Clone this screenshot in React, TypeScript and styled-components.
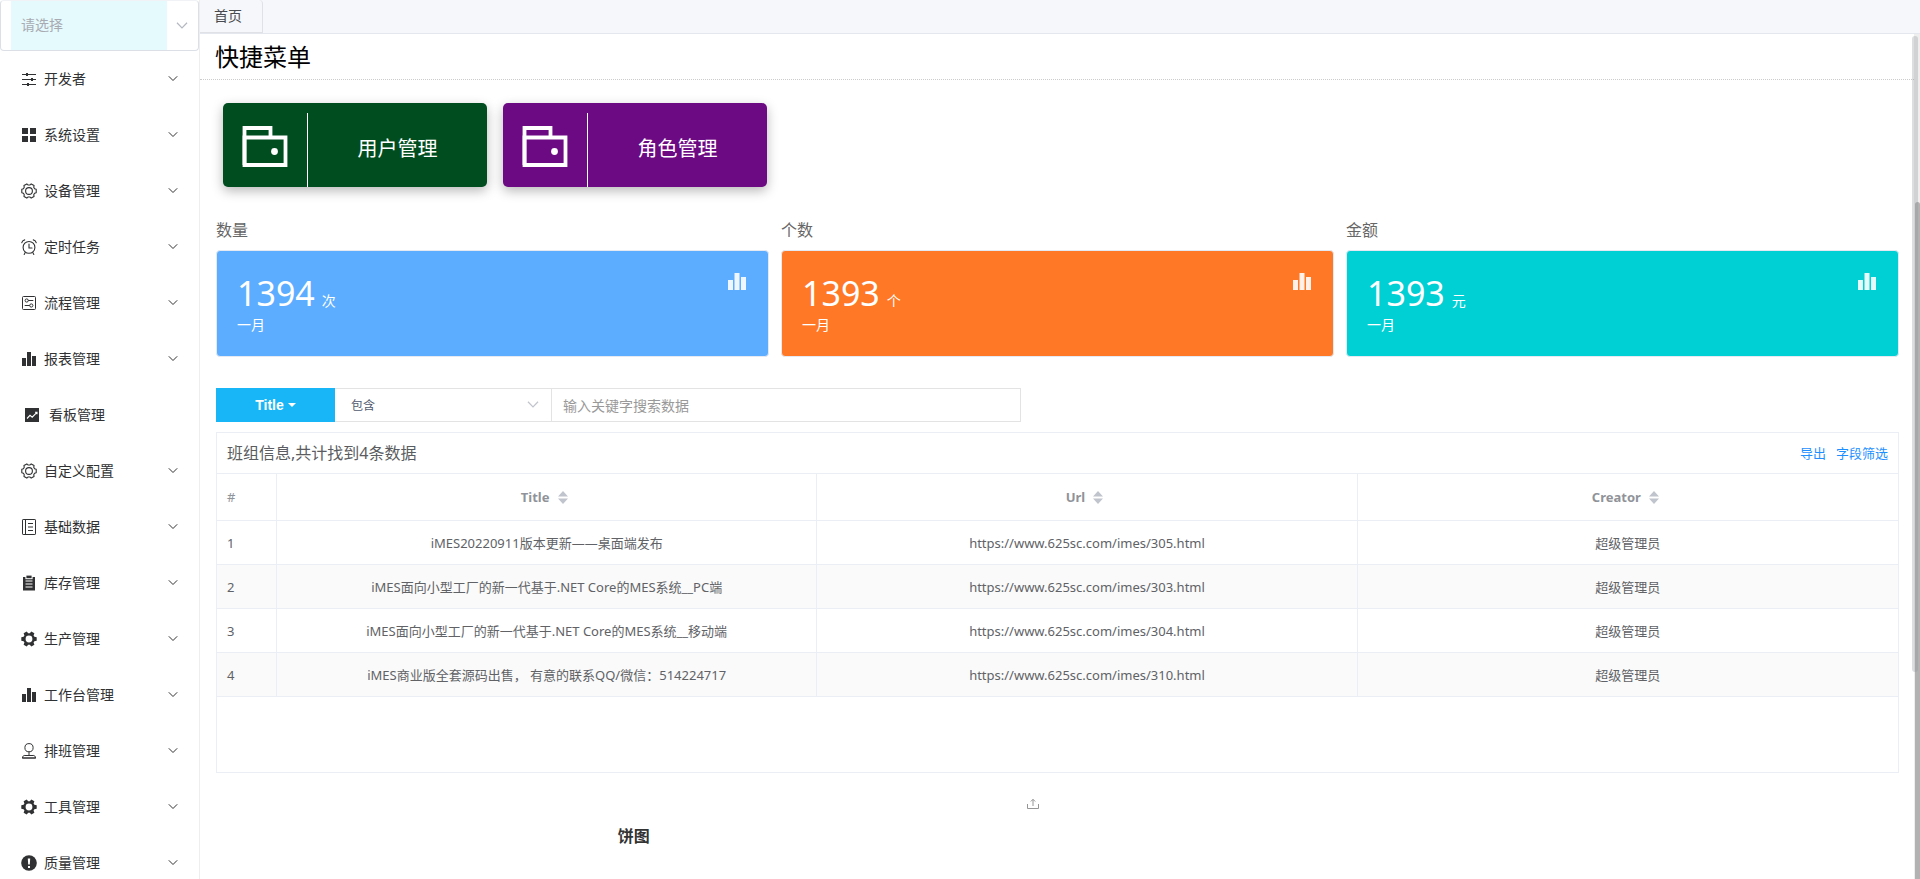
import React from "react";
import styled, { createGlobalStyle } from "styled-components";

const GlobalStyle = createGlobalStyle`
  *, *::before, *::after { box-sizing: border-box; }
  body {
    margin: 0;
    background: #fff;
    color: #606266;
    font-family: "Noto Sans", "Noto Sans CJK SC", sans-serif;
    font-size: 14px;
  }
  button, select, input { font-family: inherit; margin: 0; }
  ul, h1, h2, p { margin: 0; padding: 0; }
  ul { list-style: none; }
`;

/* ---------- icons ---------- */

const gearPath = (outer: number, inner: number) => {
  const points: string[] = [];
  for (let i = 0; i < 6; i++) {
    const base = i * 60;
    [
      [base - 13, outer],
      [base + 13, outer],
      [base + 22, inner],
      [base + 38, inner],
    ].forEach(([deg, r]) => {
      const a = (deg * Math.PI) / 180;
      points.push(`${(8 + r * Math.cos(a)).toFixed(2)} ${(8 + r * Math.sin(a)).toFixed(2)}`);
    });
  }
  return `M${points.join("L")}Z`;
};

const icons = {
  operation: (
    <>
      <path d="M1 3.5h14M1 8.5h14M1 13.5h14" stroke="currentColor" strokeWidth="1" />
      <path d="M5 2h2v3H5zM10 7h2v3h-2zM6 12h2v3H6z" fill="currentColor" />
    </>
  ),
  menu: <path d="M1 1h6v6H1zM9 1h6v6H9zM1 9h6v6H1zM9 9h6v6H9z" fill="currentColor" />,
  setting: (
    <g fill="none" stroke="currentColor" strokeWidth="1.1" strokeLinejoin="round">
      <path d={gearPath(7.4, 6)} />
      <circle cx="8" cy="8" r="3.4" />
    </g>
  ),
  alarm: (
    <g fill="none" stroke="currentColor" strokeWidth="1.1" strokeLinecap="round">
      <circle cx="8" cy="8.4" r="5.9" />
      <path d="M8 5v4h3M4.2 13.6l-1 1.8M11.8 13.6l1 1.8M.7 3.8A4 4 0 0 1 3.7.9M15.3 3.8A4 4 0 0 0 12.3.9" />
    </g>
  ),
  setup: (
    <g fill="none" stroke="currentColor">
      <rect x="1.5" y="1.5" width="13" height="13" rx="1" />
      <circle cx="5.7" cy="5.5" r="1.6" />
      <circle cx="10.3" cy="10.5" r="1.6" />
      <path d="M7.3 5.5h5M3.7 10.5h5" />
    </g>
  ),
  data: <path d="M1 7h4v8H1zM6 1h4v14H6zM11 5h4v10h-4z" fill="currentColor" />,
  marketing: (
    <>
      <path d="M1 1h14v14H1z" fill="currentColor" />
      <path d="M3 11.5l3-3.2 2.2 1.9 4.5-4.6M11 5.2h2v2" fill="none" stroke="#fff" strokeWidth="1.1" />
    </>
  ),
  notebook: (
    <g fill="none" stroke="currentColor">
      <rect x="1.5" y=".5" width="13" height="15" rx=".6" />
      <path d="M4.5.5v15M7 4.5h5M7 8h5M7 11.5h5" />
    </g>
  ),
  order: (
    <>
      <path d="M2 2h12v13.5H2z" fill="currentColor" />
      <path d="M4.5 6h7M4.5 9h7M4.5 12h7" stroke="#fff" strokeWidth="1" />
      <path d="M4.4 0h7.2v4.2H4.4z" fill="#fff" />
      <path d="M5.4.6h5.2v2.6H5.4z" fill="currentColor" />
    </>
  ),
  tools: (
    <path
      fillRule="evenodd"
      fill="currentColor"
      d={`${gearPath(7.9, 5.8)}M8 4.6a3.4 3.4 0 1 0 0 6.8a3.4 3.4 0 1 0 0-6.8Z`}
    />
  ),
  coordinate: (
    <g fill="none" stroke="currentColor">
      <circle cx="8" cy="4.7" r="4.1" />
      <path d="M8 8.8v3.7M1.6 15v-1.4l1.6-1.1h9.6l1.6 1.1V15zM1 15h14" />
    </g>
  ),
  warning: (
    <>
      <circle cx="8" cy="8" r="7.8" fill="currentColor" />
      <path d="M6.8 3.4h2.4L8.8 9.4H7.2zM7 11h2v1.9H7z" fill="#fff" />
    </>
  ),
};

type IconName = keyof typeof icons;

const Glyph = styled.svg`
  flex: none;
  display: block;
  width: 16px;
  height: 16px;
`;

const Icon = ({ name }: { name: IconName }) => (
  <Glyph viewBox="0 0 16 16" aria-hidden="true">
    {icons[name]}
  </Glyph>
);

const ChevronSvg = styled.svg<{ $width: number; $color: string }>`
  flex: none;
  display: block;
  width: ${(p) => p.$width}px;
  height: ${(p) => p.$width}px;
  color: ${(p) => p.$color};
  pointer-events: none;
`;

const Chevron = ({ width = 10, color = "#303133" }: { width?: number; color?: string }) => (
  <ChevronSvg $width={width} $color={color} viewBox="0 0 10 10" aria-hidden="true">
    <path d="M.8 2.300L5 6.500l4.200-4.200" fill="none" stroke="currentColor" strokeWidth="1" />
  </ChevronSvg>
);

/* ---------- shell ---------- */

const Shell = styled.div`
  display: flex;
  height: 100vh;
  overflow: hidden;
`;

const Sidebar = styled.aside`
  flex: 0 0 200px;
  border-right: 1px solid #eee;
  overflow: hidden;
`;

const SideSelectBox = styled.div`
  display: flex;
  align-items: center;
  height: 51px;
  padding: 0 10px;
  border: 1px solid #dcdfe6;
  border-top-color: #f0f2f5;
  border-radius: 4px;
`;

const SideSelect = styled.select`
  flex: 1;
  align-self: stretch;
  min-width: 0;
  margin-right: 9px;
  padding: 0 10px 3px;
  border: 0;
  appearance: none;
  background: #e5fafd;
  color: #a8abb2;
  font-size: 14px;
  outline: none;
`;

const MenuButton = styled.button<{ $leaf: boolean }>`
  display: flex;
  align-items: center;
  gap: ${(p) => (p.$leaf ? 9 : 7)}px;
  width: 100%;
  height: 56px;
  padding: 0 21px 0 ${(p) => (p.$leaf ? 24 : 21)}px;
  border: 0;
  background: none;
  color: #303133;
  font-size: 14px;
  line-height: 20px;
  text-align: left;
  cursor: pointer;
`;

const MenuText = styled.span`
  flex: 1;
`;

const Main = styled.main`
  position: relative;
  display: flex;
  flex: 1;
  flex-direction: column;
  min-width: 0;
`;

const TabBar = styled.div`
  flex: none;
  display: flex;
  align-items: flex-start;
  height: 34px;
  border-bottom: 1px solid #e4e7ed;
  background: #f5f7fa;
`;

const Tab = styled.button`
  height: 33px;
  padding: 0 20px 0 14px;
  border: 1px solid #dfe1e6;
  border-width: 0 1px 1px 0;
  border-radius: 0 4px 0 0;
  background: #f5f7fa;
  color: #484a4d;
  font-size: 14px;
  line-height: 20px;
`;

const Content = styled.div`
  flex: 1;
  min-height: 0;
  margin-right: 6px;
  overflow: hidden;
`;

const ScrollTrack = styled.div`
  position: absolute;
  top: 34px;
  right: 0;
  bottom: 0;
  width: 6px;
  background: #eee;
`;

const ScrollThumb = styled.div`
  position: absolute;
  top: 168px;
  right: 0;
  bottom: 0;
  width: 5px;
  border-radius: 3px 3px 0 0;
  background: #b2b2b2;
`;

const OverlayThumb = styled.div`
  position: absolute;
  top: 36px;
  right: 2px;
  width: 6px;
  height: 636px;
  border-radius: 3px;
  background: rgba(144, 147, 153, 0.3);
`;

/* ---------- quick menu ---------- */

const PageTitle = styled.h1`
  height: 46px;
  padding: 0 15px;
  border-bottom: 1px dotted #ccc;
  color: #000;
  font-size: 24px;
  font-weight: 400;
  line-height: 46px;
`;

const QuickList = styled.div`
  display: flex;
  gap: 16px;
  padding: 23px;
`;

const QuickCard = styled.button<{ $color: string }>`
  display: flex;
  width: 264px;
  height: 84px;
  padding: 0;
  border: 0;
  border-radius: 5px;
  background: ${(p) => p.$color};
  box-shadow: 0 4px 12px rgba(0, 0, 0, 0.28);
  color: #fff;
  font-size: 20px;
  cursor: pointer;
`;

const QuickIcon = styled.span`
  flex: 0 0 85px;
  align-self: stretch;
  margin-top: 10px;
  padding: 13px 0 0 19px;
  border-right: 1px solid #fff;

  svg {
    display: block;
    width: 46px;
    height: 41px;
  }
`;

const QuickText = styled.span`
  flex: 1;
  align-self: center;
  padding-top: 8px;
  line-height: 32px;
`;

const WalletIcon = () => (
  <svg viewBox="0 0 46 41" aria-hidden="true">
    <g fill="none" stroke="#fff" strokeWidth="3.8">
      <path d="M2.5 39V2h26v9.5" />
      <path d="M2.5 11.5h41V39h-41z" />
    </g>
    <circle cx="32.5" cy="25.5" r="3.4" fill="#fff" />
  </svg>
);

/* ---------- statistics ---------- */

const Body = styled.div`
  padding: 0 15px 0 16px;
`;

const StatGrid = styled.section`
  display: grid;
  grid-template-columns: repeat(3, 1fr);
  gap: 12px;
`;

const StatLabel = styled.h2`
  color: #666;
  font-size: 16px;
  font-weight: 400;
  line-height: 40px;
`;

const StatCard = styled.div<{ $color: string }>`
  display: flex;
  justify-content: space-between;
  height: 107px;
  padding: 20px 22px 0 20px;
  border: 1px solid #e4e9f2;
  border-radius: 4px;
  background: ${(p) => p.$color};
  color: #fff;
`;

const StatValue = styled.p`
  display: flex;
  align-items: baseline;
  gap: 7px;
  font-size: 34px;
  line-height: 44px;
`;

const StatUnit = styled.span`
  font-size: 14px;
  line-height: 20px;
`;

const StatMonth = styled.p`
  font-size: 14px;
  line-height: 20px;
`;

const StatIcon = styled.svg`
  width: 18px;
  height: 18px;
  margin-top: 1px;
  opacity: 0.9;
`;

/* ---------- search ---------- */

const SearchBar = styled.form`
  display: flex;
  width: 805px;
  height: 34px;
  margin: 31px 0 10px;
`;

const FieldButton = styled.button`
  flex: 0 0 119px;
  display: flex;
  align-items: center;
  justify-content: center;
  gap: 4px;
  padding: 0;
  border: 0;
  background: #18b6f6;
  color: #fff;
  font-family: "Liberation Sans", sans-serif;
  font-size: 14px;
  font-weight: 700;
`;

const CaretDown = styled.svg`
  width: 8px;
  height: 4px;
`;

const MatchBox = styled.div`
  flex: 0 0 217px;
  display: flex;
  align-items: center;
  padding-right: 12px;
  border: 1px solid #e3e3e3;
  border-left: 0;
`;

const MatchSelect = styled.select`
  flex: 1;
  min-width: 0;
  height: 32px;
  padding: 1px 16px 0;
  border: 0;
  appearance: none;
  background: none;
  color: #515a6e;
  font-size: 12px;
  outline: none;
`;

const KeywordInput = styled.input`
  flex: 1;
  min-width: 0;
  padding: 0 11px;
  border: 1px solid #e3e3e3;
  border-left: 0;
  color: #606266;
  font-size: 14px;
  outline: none;

  &::placeholder {
    color: #999;
    opacity: 1;
  }
`;

/* ---------- table ---------- */

const Panel = styled.section`
  min-height: 341px;
  border: 1px solid #ebeef5;
`;

const PanelHead = styled.header`
  display: flex;
  align-items: center;
  justify-content: space-between;
  height: 41px;
  padding: 0 10px;
  border-bottom: 1px solid #ebeef5;
`;

const PanelTitle = styled.h2`
  color: #5a5c60;
  font-size: 16px;
  font-weight: 400;
  line-height: 24px;
`;

const PanelLinks = styled.div`
  display: flex;
  gap: 10px;
  font-size: 13px;
  line-height: 20px;
`;

const PanelLink = styled.a`
  color: #1e8fff;
  text-decoration: none;
`;

const Table = styled.table`
  width: 100%;
  border-spacing: 0;
  table-layout: fixed;
  font-size: 13px;
`;

const HeadCell = styled.th<{ $index?: boolean }>`
  width: ${(p) => (p.$index ? "60px" : "auto")};
  height: 47px;
  padding: 0 10px;
  border-right: 1px solid #ebeef5;
  border-bottom: 1px solid #ebeef5;
  color: #909399;
  font-weight: ${(p) => (p.$index ? 400 : 700)};
  text-align: ${(p) => (p.$index ? "left" : "center")};

  &:last-child { border-right: 0; }
`;

const SortLabel = styled.span`
  display: inline-flex;
  align-items: center;
  gap: 8px;
  padding-right: 5px;
`;

const SortIcon = styled.svg`
  width: 10px;
  height: 13px;
`;

const BodyRow = styled.tr`
  &:nth-child(even) { background: #fafafa; }
`;

const Cell = styled.td<{ $index?: boolean }>`
  height: 44px;
  padding: 0 10px;
  border-right: 1px solid #ebeef5;
  border-bottom: 1px solid #ebeef5;
  color: #606266;
  text-align: ${(p) => (p.$index ? "left" : "center")};

  &:last-child { border-right: 0; }
`;

/* ---------- charts ---------- */

const ChartGrid = styled.section`
  display: grid;
  grid-template-columns: 1fr 1fr;
  gap: 12px;
  padding-top: 25px;
`;

const Chart = styled.div`
  display: flex;
  flex-direction: column;
  height: 400px;
`;

const SaveButton = styled.button`
  align-self: flex-end;
  width: 12px;
  height: 12px;
  margin-right: 13px;
  padding: 0;
  border: 0;
  background: none;

  svg { display: block; width: 12px; height: 12px; }
`;

const ChartTitle = styled.h2`
  margin-top: 14px;
  color: #333;
  font-size: 16px;
  font-weight: 700;
  line-height: 24px;
  text-align: center;
`;

/* ---------- data ---------- */

const menu: { label: string; icon: IconName; leaf?: boolean }[] = [
  { label: "开发者", icon: "operation" },
  { label: "系统设置", icon: "menu" },
  { label: "设备管理", icon: "setting" },
  { label: "定时任务", icon: "alarm" },
  { label: "流程管理", icon: "setup" },
  { label: "报表管理", icon: "data" },
  { label: "看板管理", icon: "marketing", leaf: true },
  { label: "自定义配置", icon: "setting" },
  { label: "基础数据", icon: "notebook" },
  { label: "库存管理", icon: "order" },
  { label: "生产管理", icon: "tools" },
  { label: "工作台管理", icon: "data" },
  { label: "排班管理", icon: "coordinate" },
  { label: "工具管理", icon: "tools" },
  { label: "质量管理", icon: "warning" },
];

const quickLinks = [
  { label: "用户管理", color: "#004d20" },
  { label: "角色管理", color: "#6b0a82" },
];

const stats = [
  { label: "数量", value: 1394, unit: "次", color: "#5cadff" },
  { label: "个数", value: 1393, unit: "个", color: "#ff7825" },
  { label: "金额", value: 1393, unit: "元", color: "#00d0d4" },
];

const rows = [
  { title: "iMES20220911版本更新——桌面端发布", url: "https://www.625sc.com/imes/305.html" },
  { title: "iMES面向小型工厂的新一代基于.NET Core的MES系统__PC端", url: "https://www.625sc.com/imes/303.html" },
  { title: "iMES面向小型工厂的新一代基于.NET Core的MES系统__移动端", url: "https://www.625sc.com/imes/304.html" },
  { title: "iMES商业版全套源码出售， 有意的联系QQ/微信：514224717", url: "https://www.625sc.com/imes/310.html" },
];

export default function App() {
  return (
    <>
      <GlobalStyle />
      <Shell>
        <Sidebar>
          <SideSelectBox>
            <SideSelect aria-label="请选择" defaultValue="">
              <option value="">请选择</option>
            </SideSelect>
            <Chevron width={12} color="#b4b8c0" />
          </SideSelectBox>
          <nav>
            <ul>
              {menu.map((item) => (
                <li key={item.label}>
                  <MenuButton type="button" $leaf={!!item.leaf}>
                    <Icon name={item.icon} />
                    <MenuText>{item.label}</MenuText>
                    {!item.leaf && <Chevron />}
                  </MenuButton>
                </li>
              ))}
            </ul>
          </nav>
        </Sidebar>

        <Main>
          <TabBar>
            <Tab type="button">首页</Tab>
          </TabBar>
          <Content>
            <PageTitle>快捷菜单</PageTitle>
            <QuickList>
              {quickLinks.map((link) => (
                <QuickCard key={link.label} type="button" $color={link.color}>
                  <QuickIcon>
                    <WalletIcon />
                  </QuickIcon>
                  <QuickText>{link.label}</QuickText>
                </QuickCard>
              ))}
            </QuickList>

            <Body>
              <StatGrid>
                {stats.map((stat) => (
                  <div key={stat.label}>
                    <StatLabel>{stat.label}</StatLabel>
                    <StatCard $color={stat.color}>
                      <div>
                        <StatValue>
                          {stat.value}
                          <StatUnit>{stat.unit}</StatUnit>
                        </StatValue>
                        <StatMonth>一月</StatMonth>
                      </div>
                      <StatIcon viewBox="0 0 18 18" aria-hidden="true">
                        <path d="M0 8h5v10H0zM6.5 1h5v17h-5zM13 5h5v13h-5z" fill="#fff" />
                      </StatIcon>
                    </StatCard>
                  </div>
                ))}
              </StatGrid>

              <SearchBar onSubmit={(e) => e.preventDefault()}>
                <FieldButton type="button">
                  Title
                  <CaretDown viewBox="0 0 8 4" aria-hidden="true">
                    <path d="M0 0h8L4 4z" fill="#fff" />
                  </CaretDown>
                </FieldButton>
                <MatchBox>
                  <MatchSelect aria-label="包含" defaultValue="like">
                    <option value="like">包含</option>
                  </MatchSelect>
                  <Chevron width={12} color="#c0c4cc" />
                </MatchBox>
                <KeywordInput aria-label="输入关键字搜索数据" placeholder="输入关键字搜索数据" />
              </SearchBar>

              <Panel>
                <PanelHead>
                  <PanelTitle>班组信息,共计找到4条数据</PanelTitle>
                  <PanelLinks>
                    <PanelLink href="#export">导出</PanelLink>
                    <PanelLink href="#fields">字段筛选</PanelLink>
                  </PanelLinks>
                </PanelHead>
                <Table>
                  <thead>
                    <tr>
                      <HeadCell $index>#</HeadCell>
                      {["Title", "Url", "Creator"].map((name) => (
                        <HeadCell key={name}>
                          <SortLabel>
                            {name}
                            <SortIcon viewBox="0 0 10 13" aria-hidden="true">
                              <path d="M5 0l5 5.5H0zM5 13l5-5.5H0z" fill="#c0c4cc" />
                            </SortIcon>
                          </SortLabel>
                        </HeadCell>
                      ))}
                    </tr>
                  </thead>
                  <tbody>
                    {rows.map((row, i) => (
                      <BodyRow key={row.url}>
                        <Cell $index>{i + 1}</Cell>
                        <Cell>{row.title}</Cell>
                        <Cell>{row.url}</Cell>
                        <Cell>超级管理员</Cell>
                      </BodyRow>
                    ))}
                  </tbody>
                </Table>
              </Panel>

              <ChartGrid>
                <Chart>
                  <SaveButton type="button" aria-label="保存为图片">
                    <svg viewBox="0 0 12 12" aria-hidden="true">
                      <path
                        d="M.5 6v4.5h11V6M6 8V1.5M3.8 3.5L6 1.3l2.2 2.2"
                        fill="none"
                        stroke="#8a8a8a"
                        strokeWidth=".9"
                      />
                    </svg>
                  </SaveButton>
                  <ChartTitle>饼图</ChartTitle>
                </Chart>
                <Chart />
              </ChartGrid>
            </Body>
          </Content>
          <ScrollTrack>
            <ScrollThumb />
          </ScrollTrack>
          <OverlayThumb />
        </Main>
      </Shell>
    </>
  );
}
